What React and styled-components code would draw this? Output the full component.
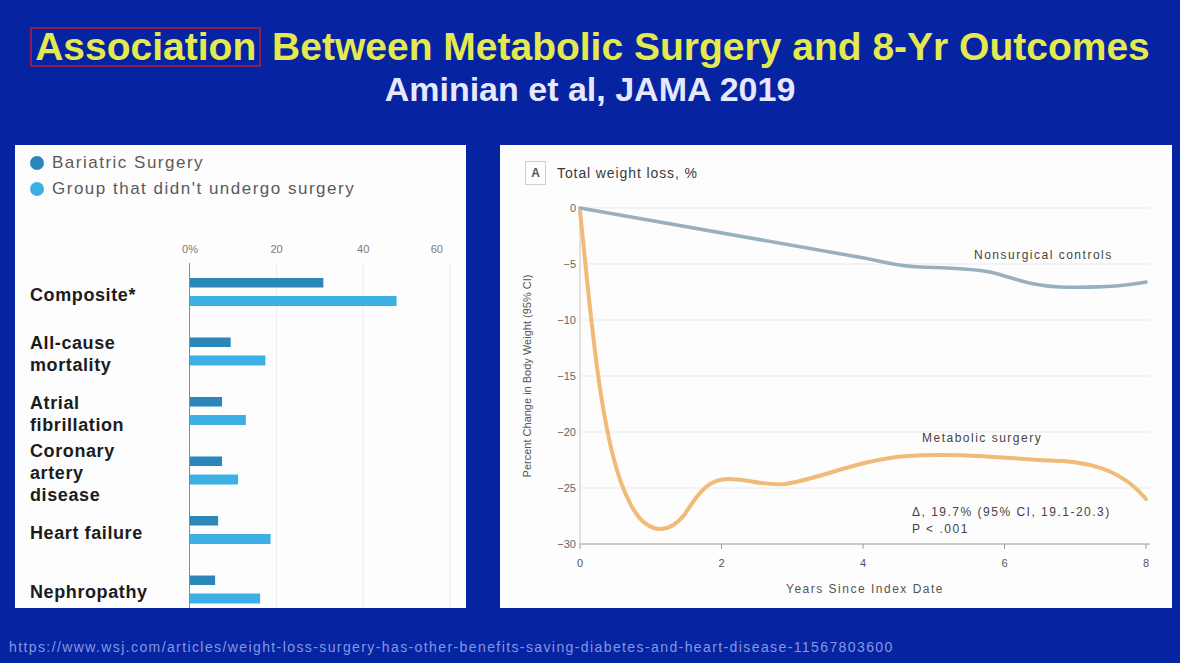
import React from 'react';
import styled, { createGlobalStyle } from 'styled-components';

const GlobalStyle = createGlobalStyle`
  html, body { margin: 0; padding: 0; background: #0623a1; }
  body { font-family: "Liberation Sans", Arial, sans-serif; }
`;

const Slide = styled.div`
  width: 1180px;
  height: 663px;
  box-sizing: border-box;
  padding-top: 25px;
  background: #0623a1;
  display: flex;
  flex-direction: column;
  align-items: center;
  overflow: hidden;
`;

const Title = styled.h1`
  margin: 0;
  font-size: 39px;
  line-height: 44px;
  font-weight: 700;
  color: #e4e94f;
  white-space: nowrap;
`;

const Highlight = styled.span`
  display: inline-block;
  border: 2px solid #8e1d55;
  padding: 0 3px;
  line-height: 36px;
`;

const Subtitle = styled.h2`
  margin: 0;
  font-size: 34px;
  line-height: 40px;
  font-weight: 700;
  color: #e6e8ff;
`;

const PanelRow = styled.div`
  align-self: stretch;
  display: flex;
  gap: 34px;
  margin-top: 36px;
  padding: 0 8px 0 15px;
  height: 463px;
`;

const Panel = styled.div`
  background: #fdfdfe;
  overflow: hidden;
  box-sizing: border-box;
  width: ${(p) => p.$width}px;
  flex: ${(p) => (p.$width ? 'none' : 1)};
`;

const LeftPanel = styled(Panel)`
  padding: 5px 0 0 15px;
`;

const Legend = styled.div`
  display: flex;
  flex-direction: column;
`;

const LegendItem = styled.div`
  display: flex;
  align-items: center;
  height: 26px;
  font-size: 17px;
  letter-spacing: 1.5px;
  color: #5a5a5a;
`;

const Dot = styled.span`
  width: 14px;
  height: 14px;
  border-radius: 50%;
  background: ${(p) => p.$color};
  margin-right: 8px;
`;

const BarChart = styled.div`
  display: grid;
  grid-template-columns: 145px 1fr;
  margin-top: 33px;
`;

const Labels = styled.div`
  padding-top: 27px;
  display: flex;
  flex-direction: column;
`;

const LabelRow = styled.div`
  height: 59.5px;
  padding-top: 6px;
  box-sizing: border-box;
  display: flex;
  align-items: center;
  font-size: 18px;
  letter-spacing: 0.6px;
  line-height: 22px;
  font-weight: 700;
  color: #1c1c1c;
  white-space: nowrap;
`;

const RightPanel = styled(Panel)`
  padding-top: 16px;
`;

const ChartHeader = styled.div`
  display: flex;
  align-items: center;
  padding-left: 25px;
`;

const PanelTag = styled.span`
  width: 19px;
  height: 22px;
  border: 1px solid #cfcfcf;
  display: flex;
  align-items: center;
  justify-content: center;
  font-size: 12px;
  font-weight: 700;
  color: #555;
`;

const ChartTitle = styled.span`
  margin-left: 11px;
  font-size: 14px;
  letter-spacing: 0.9px;
  color: #3a3a3a;
`;

const LineSvg = styled.svg`
  display: block;
  margin-top: 9px;
`;

const Footer = styled.div`
  align-self: stretch;
  margin-top: 31px;
  padding-left: 9px;
  font-size: 14px;
  line-height: 16px;
  letter-spacing: 1.4px;
  color: #8498e0;
  white-space: nowrap;
`;

const DARK = '#2b87b9';
const LIGHT = '#3cb0e2';

const outcomes = [
  { label: ['Composite*'], a: 30.8, b: 47.7 },
  { label: ['All-cause', 'mortality'], a: 9.4, b: 17.4 },
  { label: ['Atrial', 'fibrillation'], a: 7.4, b: 12.9 },
  { label: ['Coronary', 'artery', 'disease'], a: 7.4, b: 11.1 },
  { label: ['Heart failure'], a: 6.5, b: 18.6 },
  { label: ['Nephropathy'], a: 5.8, b: 16.2 },
];

const SCALE = 4.33;
const X0 = 15;

function Bars() {
  const ticks = [0, 20, 40, 60];
  return (
    <svg width="291" height="373">
      {ticks.map((t, i) => {
        const x = X0 + t * SCALE;
        return (
          <g key={t}>
            {i > 0 && <line x1={x} x2={x} y1="28" y2="373" stroke="#ececec" strokeWidth="1" />}
            <text
              x={i === 3 ? 268 : x}
              y="18"
              fontSize="11"
              fill="#7a7a7a"
              textAnchor={i === 3 ? 'end' : 'middle'}
              fontFamily="Liberation Sans, Arial, sans-serif"
            >
              {i === 0 ? '0%' : t}
            </text>
          </g>
        );
      })}
      <line x1="14.5" x2="14.5" y1="28" y2="373" stroke="#8a8a8a" strokeWidth="1" />
      {outcomes.map((o, i) => {
        const cy = 57 + i * 59.5;
        return (
          <g key={i}>
            <rect x={X0} y={cy - 14} width={o.a * SCALE} height="9.5" fill={DARK} />
            <rect x={X0} y={cy + 4} width={o.b * SCALE} height="10" fill={LIGHT} />
          </g>
        );
      })}
    </svg>
  );
}

const PX = (yr) => 80 + yr * 70.75;
const PY = (v) => 14 - v * 11.2;

function WeightChart() {
  const yTicks = [0, -5, -10, -15, -20, -25, -30];
  const xTicks = [0, 2, 4, 6, 8];
  const font = 'Liberation Sans, Arial, sans-serif';
  const note = { fontSize: 12, fill: '#444', fontFamily: font, letterSpacing: 1.5 };
  return (
    <LineSvg width="672" height="415">
      {yTicks.map((v) => (
        <g key={v}>
          {v !== -30 && (
            <line x1="80" x2="650" y1={PY(v)} y2={PY(v)} stroke="#e9e9e9" strokeWidth="1.2" />
          )}
          <text x="76" y={PY(v) + 3.5} fontSize="11" fill="#666" textAnchor="end" fontFamily={font}>
            {v === 0 ? '0' : `\u2212${-v}`}
          </text>
        </g>
      ))}
      <line x1="80" x2="80" y1={PY(0)} y2={PY(-30)} stroke="#c4c4c4" strokeWidth="1" />
      <line x1="80" x2="650" y1={PY(-30)} y2={PY(-30)} stroke="#9a9a9a" strokeWidth="1" />
      {xTicks.map((t) => (
        <g key={t}>
          <line x1={PX(t)} x2={PX(t)} y1={PY(-30)} y2={PY(-30) + 5} stroke="#9a9a9a" strokeWidth="1" />
          <text x={PX(t)} y="373" fontSize="11" fill="#555" textAnchor="middle" fontFamily={font}>
            {t}
          </text>
        </g>
      ))}
      <text x="365" y="399" textAnchor="middle" {...note} fill="#555">
        Years Since Index Date
      </text>
      <text
        x="0"
        y="0"
        transform="translate(31 182) rotate(-90)"
        fontSize="11"
        fill="#555"
        textAnchor="middle"
        fontFamily={font}
      >
        Percent Change in Body Weight (95% CI)
      </text>
      <path
        d="M80,14 C200,35 300,52 364,64 C385,68 395,72 420,73 C450,74 470,74 490,78 C515,84 530,92 560,93 C600,94 625,92 646,88"
        fill="none"
        stroke="#98b0bd"
        strokeWidth="3.5"
        strokeLinecap="round"
      />
      <path
        d="M80,17 C90,110 100,250 128,305 C143,338 165,345 185,320 C200,296 210,285 228,285 C250,285 262,292 285,290 C320,285 360,265 408,262 C460,258 520,266 563,267 C600,270 625,280 646,305"
        fill="none"
        stroke="#f0bb78"
        strokeWidth="4"
        strokeLinecap="round"
      />
      <text x="474" y="65" {...note}>
        Nonsurgical controls
      </text>
      <text x="422" y="248" {...note}>
        Metabolic surgery
      </text>
      <text x="412" y="322" {...note}>
        Δ, 19.7% (95% CI, 19.1-20.3)
      </text>
      <text x="412" y="339" {...note}>
        P &lt; .001
      </text>
    </LineSvg>
  );
}

export default function App() {
  return (
    <>
      <GlobalStyle />
      <Slide>
        <Title>
          <Highlight>Association</Highlight> Between Metabolic Surgery and 8-Yr Outcomes
        </Title>
        <Subtitle>Aminian et al, JAMA 2019</Subtitle>
        <PanelRow>
          <LeftPanel $width={451}>
            <Legend>
              <LegendItem>
                <Dot $color={DARK} />
                Bariatric Surgery
              </LegendItem>
              <LegendItem>
                <Dot $color={LIGHT} />
                Group that didn't undergo surgery
              </LegendItem>
            </Legend>
            <BarChart>
              <Labels>
                {outcomes.map((o, i) => (
                  <LabelRow key={i}>
                    <div>
                      {o.label.map((line) => (
                        <div key={line}>{line}</div>
                      ))}
                    </div>
                  </LabelRow>
                ))}
              </Labels>
              <Bars />
            </BarChart>
          </LeftPanel>
          <RightPanel>
            <ChartHeader>
              <PanelTag>A</PanelTag>
              <ChartTitle>Total weight loss, %</ChartTitle>
            </ChartHeader>
            <WeightChart />
          </RightPanel>
        </PanelRow>
        <Footer>
          https://www.wsj.com/articles/weight-loss-surgery-has-other-benefits-saving-diabetes-and-heart-disease-11567803600
        </Footer>
      </Slide>
    </>
  );
}
